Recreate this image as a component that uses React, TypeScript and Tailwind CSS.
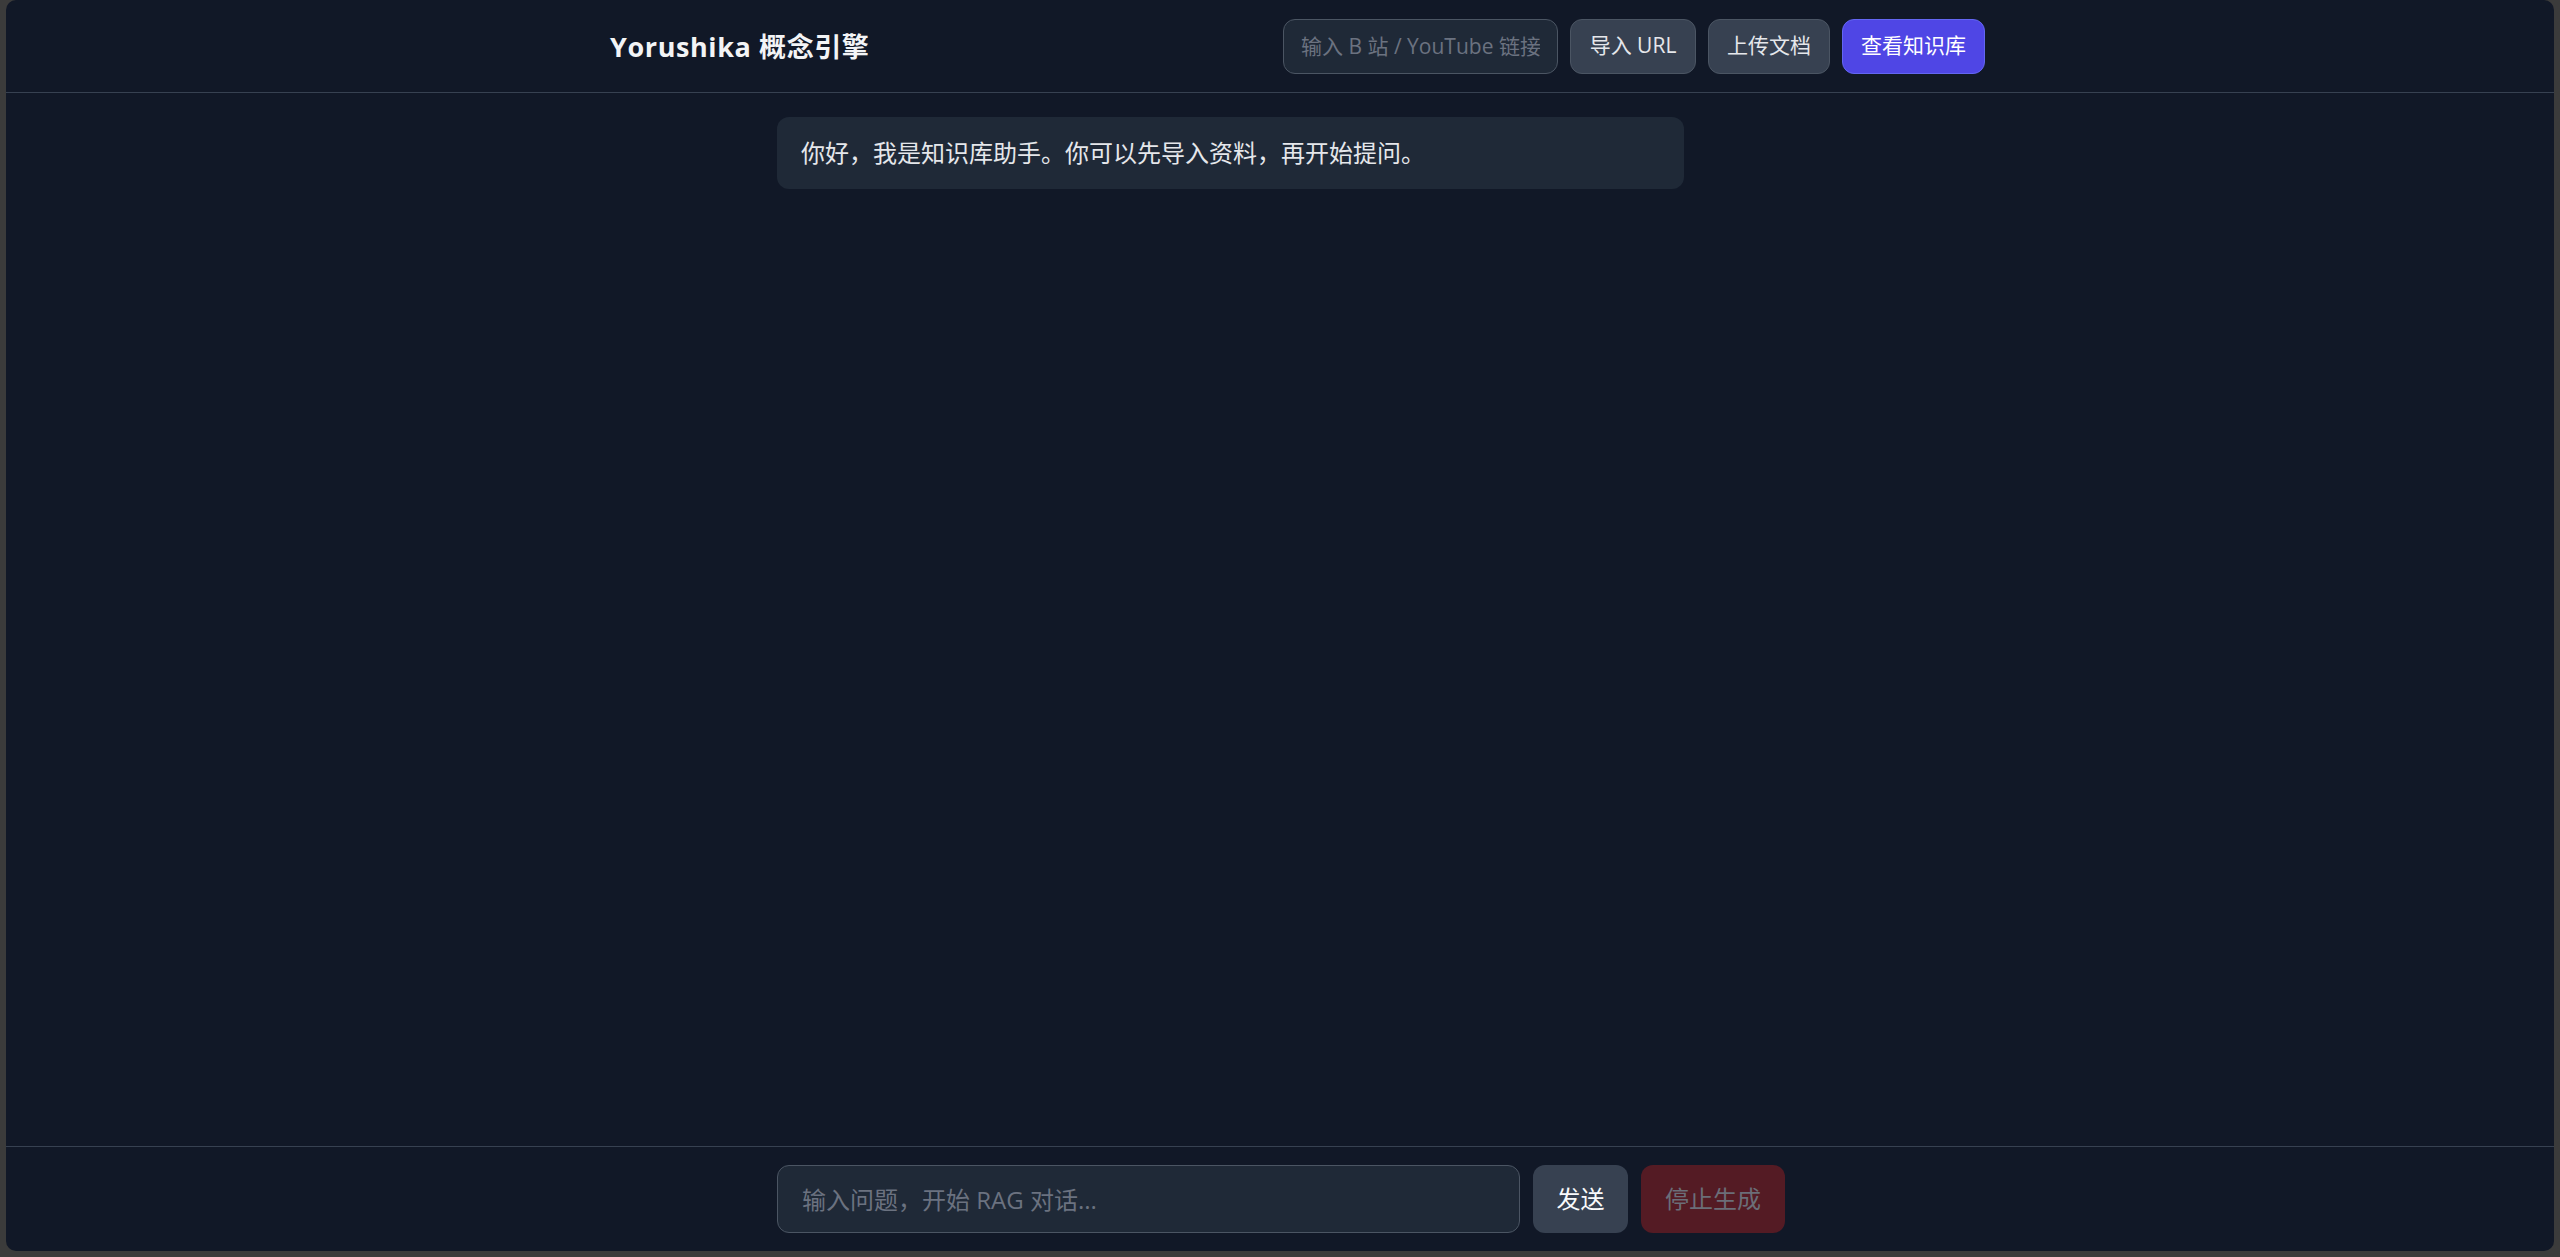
import React from "react";

const FONT = { fontFamily: '"Open Sans", "Noto Sans CJK SC", sans-serif' };

export default function App() {
  return (
    <div className="w-full h-screen bg-[#3b3b3b] px-[6px] pb-[6px]" style={FONT}>
      <div className="flex h-full flex-col overflow-hidden rounded-[10px] bg-[#111827]">
        {/* Header */}
        <header className="flex h-[93px] shrink-0 items-center justify-between border-b border-[#374151] pl-[604px] pr-[569px]">
          <h1 className="text-[27px] font-bold leading-none tracking-[0.6px] text-[#f3f4f6]">
            Yorushika 概念引擎
          </h1>
          <div className="flex items-center gap-[12px]">
            <input
              className="h-[55px] w-[275px] rounded-[12px] border border-[#4b5563] bg-[#1f2937] px-[17px] text-[21px] text-[#e5e7eb] outline-none placeholder:text-[#6b7280]"
              placeholder="输入 B 站 / YouTube 链接"
            />
            <button className="h-[55px] w-[126px] rounded-[12px] border border-[#4b5563] bg-[#374151] text-[21px] text-[#e5e7eb]">
              导入 URL
            </button>
            <button className="h-[55px] w-[122px] rounded-[12px] border border-[#4b5563] bg-[#374151] text-[21px] text-[#e5e7eb]">
              上传文档
            </button>
            <button className="h-[55px] w-[143px] rounded-[12px] border border-[#6366f1] bg-[#4f46e5] text-[21px] text-white">
              查看知识库
            </button>
          </div>
        </header>

        {/* Chat area */}
        <main className="flex-1 overflow-y-auto py-[24px] pl-[26px] pr-[24px]">
          <div className="mx-auto flex max-w-[1008px] flex-col gap-[18px]">
            <div className="max-w-[90%] rounded-[12px] bg-[#1f2937] px-[24px] py-[18px] text-[24px] leading-[36px] text-[#e5e7eb]">
              你好，我是知识库助手。你可以先导入资料，再开始提问。
            </div>
          </div>
        </main>

        {/* Footer */}
        <footer className="shrink-0 border-t border-[#374151] py-[18px] pl-[2px]">
          <div className="mx-auto flex max-w-[1008px] gap-[13px]">
            <input
              className="h-[68px] min-w-0 flex-1 rounded-[12px] border border-[#4b5563] bg-[#1f2937] px-[24px] text-[24px] text-[#e5e7eb] outline-none placeholder:text-[#6b7280]"
              placeholder="输入问题，开始 RAG 对话..."
            />
            <button className="h-[68px] w-[95px] rounded-[12px] bg-[#374151] text-[24px] text-[#f9fafb]">
              发送
            </button>
            <button
              disabled
              className="h-[68px] w-[144px] rounded-[12px] bg-[#541b24] text-[24px] text-[#6b6e78]"
            >
              停止生成
            </button>
          </div>
        </footer>
      </div>
    </div>
  );
}
